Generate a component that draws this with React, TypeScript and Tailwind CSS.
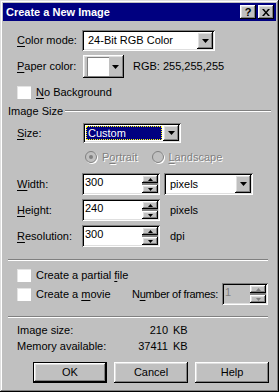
import React from "react";

const sunken =
  "shadow-[inset_1px_1px_#808080,inset_-1px_-1px_#fff,inset_2px_2px_#000,inset_-2px_-2px_#dfdfdf]";
const raised =
  "shadow-[inset_-1px_-1px_#000,inset_1px_1px_#fff,inset_-2px_-2px_#808080,inset_2px_2px_#dfdfdf]";

function U({ children }: { children: React.ReactNode }) {
  return <span className="underline underline-offset-[2px]">{children}</span>;
}

function Arrow() {
  return (
    <svg width="7" height="4" viewBox="0 0 7 4">
      <path d="M0 0h7L3.5 4z" fill="#000" />
    </svg>
  );
}

function DropBtn({ className = "" }: { className?: string }) {
  return (
    <div className={`flex items-center justify-center bg-[#c0c0c0] ${raised} ${className}`}>
      <Arrow />
    </div>
  );
}

function Combo({ text, w, selected }: { text: string; w: string; selected?: boolean }) {
  return (
    <div className={`flex h-full shrink-0 ${w} bg-white p-[2px] ${sunken}`}>
      <div className="flex flex-1 items-center p-[1px]">
        {selected ? (
          <div className="flex h-full w-full items-center bg-[#000080] pl-[2px] text-white outline outline-1 outline-dotted outline-[#ffff00] -outline-offset-1">
            {text}
          </div>
        ) : (
          <span className="pl-[3px]">{text}</span>
        )}
      </div>
      <DropBtn className="w-[16px]" />
    </div>
  );
}

function SpinArrow({ up, disabled }: { up?: boolean; disabled?: boolean }) {
  return (
    <svg width="5" height="3" viewBox="0 0 5 3">
      <path d={up ? "M2.5 0L5 3H0z" : "M0 0h5L2.5 3z"} fill={disabled ? "#808080" : "#000"} />
    </svg>
  );
}

function Spin({ value, w, disabled }: { value: string; w: string; disabled?: boolean }) {
  return (
    <div className={`flex h-full shrink-0 ${w} ${disabled ? "bg-[#c0c0c0]" : "bg-white"} p-[2px] ${sunken}`}>
      <div className={`flex-1 pl-[1px] pt-[1px] ${disabled ? "text-[#808080]" : ""}`}>{value}</div>
      <div className="flex w-[16px] flex-col justify-between bg-[#808080]">
        <div className={`flex h-[8px] items-center justify-center bg-[#c0c0c0] ${raised}`}>
          <SpinArrow up disabled={disabled} />
        </div>
        <div className={`flex h-[8px] items-center justify-center bg-[#c0c0c0] ${raised}`}>
          <SpinArrow disabled={disabled} />
        </div>
      </div>
    </div>
  );
}

function Check() {
  return <div className="h-[13px] w-[14px] shrink-0 bg-white shadow-[inset_1px_1px_#e4e4e4]" />;
}

function Radio({ dot }: { dot?: boolean }) {
  return (
    <div className="flex h-[12px] w-[12px] shrink-0 items-center justify-center rounded-full border border-[#808080] bg-[#c0c0c0] shadow-[1px_1px_#fff]">
      {dot && <div className="h-[4px] w-[4px] rounded-full bg-[#808080]" />}
    </div>
  );
}

function Sep({ className = "" }: { className?: string }) {
  return <div className={`h-[2px] shrink-0 border-t border-[#808080] border-b border-b-white ${className}`} />;
}

function Button({ children, def }: { children: React.ReactNode; def?: boolean }) {
  return (
    <div className={`h-full w-[74px] ${def ? "border border-black" : ""}`}>
      <div className={`flex h-full w-full items-center justify-center bg-[#c0c0c0] ${raised}`}>{children}</div>
    </div>
  );
}

function TitleBtn({ children }: { children: React.ReactNode }) {
  return (
    <div className={`flex h-[14px] w-[16px] items-center justify-center bg-[#c0c0c0] text-[11px] font-bold leading-none text-black ${raised}`}>
      {children}
    </div>
  );
}

export default function App() {
  return (
    <div
      className="h-[392px] w-[279px] whitespace-nowrap bg-[#c0c0c0] p-[3px] text-[11px] leading-[13px] text-black shadow-[inset_-1px_-1px_#000,inset_1px_1px_#dfdfdf,inset_-2px_-2px_#808080,inset_2px_2px_#fff]"
      style={{ fontFamily: '"Liberation Sans", Arial, sans-serif' }}
    >
      <div className="flex h-[18px] items-center justify-between bg-[#000080] pl-[3px]">
        <span className="text-[11px] font-bold text-white">Create a New Image</span>
        <div className="flex gap-[2px] pr-[2px]">
          <TitleBtn>?</TitleBtn>
          <TitleBtn>
            <svg width="8" height="7" viewBox="0 0 8 7">
              <path d="M0 0h2l2 2.5L6 0h2L5 3.5 8 7H6L4 4.5 2 7H0l3-3.5z" fill="#000" />
            </svg>
          </TitleBtn>
        </div>
      </div>

      <div className="flex flex-col">
        <div className="mt-[9px] flex h-[21px] items-center pl-[14px]">
          <span className="w-[65px] shrink-0"><U>C</U>olor mode:</span>
          <Combo text="24-Bit RGB Color" w="w-[133px]" />
        </div>

        <div className="mt-[4px] flex h-[23px] items-center pl-[14px]">
          <span className="w-[66px] shrink-0"><U>P</U>aper color:</span>
          <div className={`flex h-full w-[41px] shrink-0 items-center bg-[#c0c0c0] pl-[4px] ${raised}`}>
            <div className="h-[19px] w-[22px] bg-white shadow-[inset_1px_1px_#808080,inset_-1px_-1px_#fff]" />
            <div className="ml-[3px]"><Arrow /></div>
          </div>
          <span className="ml-[9px]">RGB: 255,255,255</span>
        </div>

        <div className="mt-[8px] flex h-[13px] items-center pl-[14px]">
          <Check />
          <span className="ml-[5px]"><U>N</U>o Background</span>
        </div>

        <div className="mt-[5px] flex h-[14px] items-center pl-[5px]">
          <span>Image Size</span>
          <Sep className="ml-[2px] w-[206px]" />
        </div>

        <div className="mt-[5px] flex h-[20px] items-center pl-[14px]">
          <span className="w-[66px] shrink-0"><U>S</U>ize:</span>
          <Combo text="Custom" w="w-[98px]" selected />
        </div>

        <div className="mt-[7px] flex h-[14px] items-center pl-[82px] text-[#808080] [text-shadow:1px_1px_#fff]">
          <Radio dot />
          <span className="ml-[5px]">P<U>o</U>rtrait</span>
          <div className="ml-[15px]"><Radio /></div>
          <span className="ml-[4px]"><U>L</U>andscape</span>
        </div>

        <div className="mt-[9px] flex h-[22px] items-center pl-[14px]">
          <span className="w-[65px] shrink-0"><U>W</U>idth:</span>
          <Spin value="300" w="w-[78px]" />
          <div className="ml-[4px] h-full"><Combo text="pixels" w="w-[89px]" /></div>
        </div>

        <div className="mt-[4px] flex h-[22px] items-center pl-[14px]">
          <span className="w-[65px] shrink-0"><U>H</U>eight:</span>
          <Spin value="240" w="w-[78px]" />
          <span className="ml-[10px]">pixels</span>
        </div>

        <div className="mt-[4px] flex h-[22px] items-center pl-[14px]">
          <span className="w-[65px] shrink-0"><U>R</U>esolution:</span>
          <Spin value="300" w="w-[78px]" />
          <span className="ml-[10px]">dpi</span>
        </div>

        <Sep className="ml-[5px] mt-[12px] w-[260px]" />

        <div className="mt-[8px] flex h-[13px] items-center pl-[14px]">
          <Check />
          <span className="ml-[5px]">Create a partial <U>f</U>ile</span>
        </div>

        <div className="mt-[1px] flex h-[22px] items-center pl-[14px]">
          <Check />
          <span className="ml-[5px] w-[96px] shrink-0">Create a <U>m</U>ovie</span>
          <span className="w-[90px] shrink-0 tracking-[-0.3px]">N<U>u</U>mber of frames:</span>
          <Spin value="1" w="w-[46px]" disabled />
        </div>

        <Sep className="ml-[5px] mt-[11px] w-[260px]" />

        <div className="mt-[5px] flex h-[14px] items-center pl-[14px]">
          <span className="w-[104px] shrink-0">Image size:</span>
          <span className="w-[47px] shrink-0 text-right">210</span>
          <span className="ml-[5px]">KB</span>
        </div>
        <div className="mt-[2px] flex h-[14px] items-center pl-[14px]">
          <span className="w-[104px] shrink-0">Memory available:</span>
          <span className="w-[47px] shrink-0 text-right">37411</span>
          <span className="ml-[5px]">KB</span>
        </div>

        <div className="mt-[9px] flex h-[21px] gap-[7px] pl-[30px]">
          <Button def>OK</Button>
          <Button>Cancel</Button>
          <Button>Help</Button>
        </div>
      </div>
    </div>
  );
}
